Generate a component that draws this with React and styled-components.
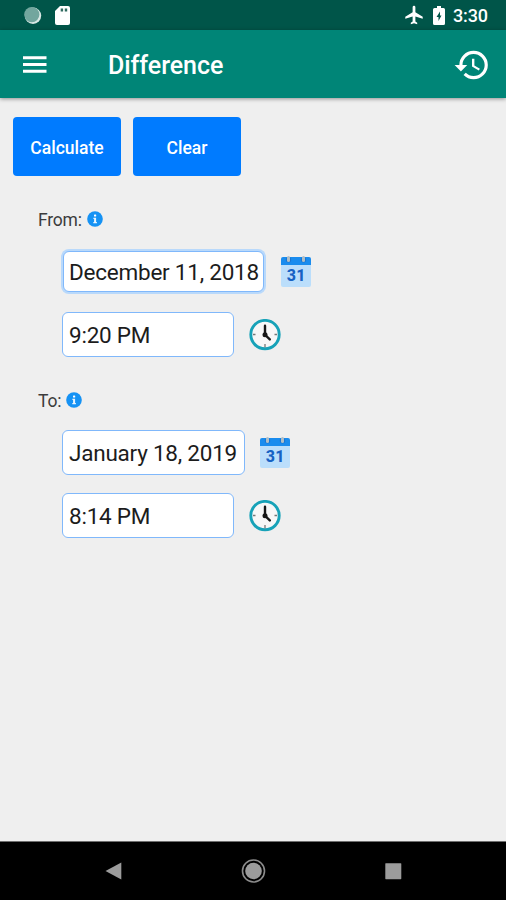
import React, { useState } from "react";
import styled, { createGlobalStyle } from "styled-components";

const GlobalStyle = createGlobalStyle`
  * {
    box-sizing: border-box;
  }

  body {
    margin: 0;
    background: #efefef;
    font-family: Roboto, "Liberation Sans", sans-serif;
  }
`;

const Screen = styled.div`
  display: flex;
  flex-direction: column;
  width: 100%;
  height: 900px;
  overflow: hidden;
  background: #efefef;
`;

const StatusBar = styled.div`
  display: flex;
  flex: none;
  align-items: center;
  justify-content: space-between;
  height: 30px;
  padding: 0 18px 0 23px;
  background: #005549;
`;

const StatusGroup = styled.div`
  display: flex;
  align-items: center;
  gap: ${(props) => props.$gap}px;
`;

const StatusTime = styled.span`
  margin-top: 2px;
  color: #fff;
  font-size: 18px;
  font-weight: 500;
  letter-spacing: -0.1px;
  line-height: 20px;
`;

const AppBar = styled.header`
  display: flex;
  flex: none;
  align-items: center;
  height: 68px;
  padding: 2px 15px 0 22px;
  background: #008577;
  box-shadow: 0 1px 4px rgba(0, 0, 0, 0.4);
`;

const IconButton = styled.button`
  display: flex;
  padding: 0;
  border: none;
  background: none;
`;

const Title = styled.h1`
  flex: 1;
  margin: 2px 0 0 60px;
  color: #fff;
  font-size: 25px;
  font-weight: 500;
  letter-spacing: -0.05px;
  line-height: 30px;
`;

const Content = styled.main`
  flex: 1;
  padding: 19px 12px 0 13px;
`;

const Actions = styled.div`
  display: flex;
  gap: 12px;
`;

const ActionButton = styled.button`
  width: 108px;
  height: 59px;
  padding: 2px 0 0;
  border: none;
  border-radius: 4px;
  background: #007bff;
  color: #fff;
  font-family: inherit;
  font-size: 17.5px;
  font-weight: 500;
`;

const Section = styled.section`
  padding: 33px 0 0 25px;
`;

const Label = styled.div`
  display: flex;
  align-items: center;
  gap: 5px;
  height: 20px;
  color: #3c3c3c;
  font-size: 17.5px;
  letter-spacing: -0.2px;
  line-height: 20px;
`;

const LabelText = styled.span`
  padding-top: 2px;
`;

const Fields = styled.div`
  display: flex;
  flex-direction: column;
  gap: 18px;
  padding: 20px 0 0 24px;
`;

const FieldRow = styled.div`
  display: flex;
  align-items: center;
  gap: ${(props) => props.$gap || 15}px;
  height: 45px;
`;

const Input = styled.input`
  width: ${(props) => props.$width}px;
  height: ${(props) => (props.$active ? 41 : 45)}px;
  margin: ${(props) => (props.$active ? "0 1px" : "0")};
  padding: 0 0 0 ${(props) => (props.$active ? 5 : 6)}px;
  border: 1.5px solid #80b8fb;
  border-radius: 6px;
  outline: none;
  background: #fff;
  box-shadow: ${(props) => (props.$active ? "0 0 0 2px #b9d9fb" : "none")};
  color: #1c1c1c;
  font-family: inherit;
  font-size: 22.5px;
  letter-spacing: -0.23px;
`;

const NavBar = styled.nav`
  display: flex;
  flex: none;
  align-items: center;
  justify-content: space-between;
  height: 59px;
  padding: 0 104px;
  border-top: 1px solid #6f6f6f;
  background: #000;
`;

const CalendarIcon = () => (
  <svg width="30" height="31" viewBox="0 0 30 31">
    <path d="M0 9h30v20a2 2 0 0 1-2 2H2a2 2 0 0 1-2-2z" fill="#bbdefb" />
    <path d="M2 1h26a2 2 0 0 1 2 2v6H0V3a2 2 0 0 1 2-2z" fill="#1a8cee" />
    <circle cx="7.5" cy="3.8" r="2.7" fill="#1976d2" />
    <circle cx="22.5" cy="3.8" r="2.7" fill="#1976d2" />
    <rect x="6" y="0" width="3" height="6" rx="1.5" fill="#b0bec5" />
    <rect x="21" y="0" width="3" height="6" rx="1.5" fill="#b0bec5" />
    <text
      x="15.2"
      y="25"
      fill="#1762c4"
      fontFamily="Roboto, sans-serif"
      fontSize="16"
      fontWeight="800"
      letterSpacing="0.3"
      textAnchor="middle"
    >
      31
    </text>
  </svg>
);

const ClockIcon = () => (
  <svg width="32" height="32" viewBox="0 0 32 32">
    <circle cx="16" cy="15.6" r="14.2" fill="#f7f7f7" stroke="#17a2b8" strokeWidth="2.9" />
    <path d="M4 15.5h2.5M25.5 15.5H28M16 25v3.5" stroke="#777" strokeWidth="1.3" />
    <path d="M16 6.8v9l4.8 4.6" fill="none" stroke="#161616" strokeWidth="2.4" strokeLinecap="round" />
    <circle cx="16" cy="15.8" r="2.5" fill="#161616" />
  </svg>
);

const InfoIcon = () => (
  <svg width="16" height="16" viewBox="0 0 16 16">
    <circle cx="8" cy="8" r="7.8" fill="#1592f4" />
    <rect x="7" y="3.5" width="2.2" height="2" rx="0.6" fill="#fff" />
    <path d="M6.4 6.7h2.7V11h.8v1.3H6.3V11h.8V8h-.7z" fill="#e9f5ff" />
  </svg>
);

const HistoryIcon = () => (
  <svg width="38" height="38" viewBox="0 0 24 24" fill="#fff">
    <path d="M13 3a9 9 0 0 0-9 9H1l3.89 3.89.07.14L9 12H6c0-3.87 3.13-7 7-7s7 3.13 7 7-3.13 7-7 7c-1.93 0-3.68-.79-4.94-2.06l-1.42 1.42A8.954 8.954 0 0 0 13 21a9 9 0 0 0 0-18zm-1 5v5l4.28 2.54.72-1.21-3.5-2.08V8H12z" />
  </svg>
);

const MenuIcon = () => (
  <svg width="26" height="20" viewBox="0 0 26 20">
    <path d="M1 2.7h23.5M1 9.5h23.5M1 16.2h23.5" stroke="#fff" strokeWidth="2.9" />
  </svg>
);

const SyncIcon = () => (
  <svg width="19" height="19" viewBox="0 0 19 19">
    <circle cx="10" cy="9.7" r="8.2" fill="#d9e8e5" />
    <circle cx="8.8" cy="8.6" r="7.6" fill="#72a69e" />
  </svg>
);

const SdCardIcon = () => (
  <svg width="15" height="19" viewBox="0 0 15 19">
    <path d="M5 0h8a2 2 0 0 1 2 2v15a2 2 0 0 1-2 2H2a2 2 0 0 1-2-2V5z" fill="#fff" />
    <path d="M6.9 2.5v3M11 2.5v3" stroke="#2f6a60" strokeWidth="2.4" />
  </svg>
);

const AirplaneIcon = () => (
  <svg width="22" height="22" viewBox="0 0 24 24" fill="#fff">
    <path d="M21.5 16v-2l-8-5V3.5a1.5 1.5 0 0 0-3 0V9l-8 5v2l8-2.5V19l-2 1.5V22l3.5-1 3.5 1v-1.5l-2-1.5v-5.5z" />
  </svg>
);

const BatteryIcon = () => (
  <svg width="12" height="19" viewBox="0 0 12 19">
    <path d="M4 0h4v2h2.5A1.5 1.5 0 0 1 12 3.5v14a1.5 1.5 0 0 1-1.5 1.5h-9A1.5 1.5 0 0 1 0 17.5v-14A1.5 1.5 0 0 1 1.5 2H4z" fill="#fff" />
    <path d="M7 5.5 3.5 11h2v4L8.5 9.5H7z" fill="#005549" />
  </svg>
);

const BackIcon = () => (
  <svg width="18" height="18" viewBox="0 0 18 18">
    <path d="M1.5 9 17.3.5v17z" fill="#9c9c9c" />
  </svg>
);

const HomeIcon = () => (
  <svg width="25" height="25" viewBox="0 0 25 25">
    <circle cx="12.5" cy="12" r="11" fill="none" stroke="#8c8c8c" strokeWidth="1.6" />
    <circle cx="12.5" cy="12" r="8.3" fill="#9c9c9c" />
  </svg>
);

const RecentsIcon = () => (
  <svg width="17" height="17" viewBox="0 0 17 17">
    <rect x="0.3" y="0.2" width="16" height="16" rx="0.6" fill="#9c9c9c" />
  </svg>
);

const initialValues = {
  fromDate: "December 11, 2018",
  fromTime: "9:20 PM",
  toDate: "January 18, 2019",
  toTime: "8:14 PM",
};

const emptyValues = { fromDate: "", fromTime: "", toDate: "", toTime: "" };

const App = () => {
  const [values, setValues] = useState(initialValues);
  const [active, setActive] = useState("fromDate");

  const field = (name) => ({
    value: values[name],
    $active: active === name,
    onFocus: () => setActive(name),
    onChange: (e) => setValues({ ...values, [name]: e.target.value }),
  });

  return (
    <Screen>
      <GlobalStyle />
      <StatusBar>
        <StatusGroup $gap={13}>
          <SyncIcon />
          <SdCardIcon />
        </StatusGroup>
        <StatusGroup $gap={8}>
          <AirplaneIcon />
          <BatteryIcon />
          <StatusTime>3:30</StatusTime>
        </StatusGroup>
      </StatusBar>
      <AppBar>
        <IconButton aria-label="Menu">
          <MenuIcon />
        </IconButton>
        <Title>Difference</Title>
        <IconButton aria-label="History">
          <HistoryIcon />
        </IconButton>
      </AppBar>
      <Content>
        <Actions>
          <ActionButton>Calculate</ActionButton>
          <ActionButton onClick={() => setValues(emptyValues)}>Clear</ActionButton>
        </Actions>
        <Section>
          <Label>
            <LabelText>From:</LabelText>
            <InfoIcon />
          </Label>
          <Fields>
            <FieldRow $gap={16}>
              <Input $width={201} {...field("fromDate")} />
              <CalendarIcon />
            </FieldRow>
            <FieldRow>
              <Input $width={172} {...field("fromTime")} />
              <ClockIcon />
            </FieldRow>
          </Fields>
        </Section>
        <Section>
          <Label>
            <LabelText>To:</LabelText>
            <InfoIcon />
          </Label>
          <Fields>
            <FieldRow>
              <Input $width={183} {...field("toDate")} />
              <CalendarIcon />
            </FieldRow>
            <FieldRow>
              <Input $width={172} {...field("toTime")} />
              <ClockIcon />
            </FieldRow>
          </Fields>
        </Section>
      </Content>
      <NavBar>
        <BackIcon />
        <HomeIcon />
        <RecentsIcon />
      </NavBar>
    </Screen>
  );
};

export default App;
